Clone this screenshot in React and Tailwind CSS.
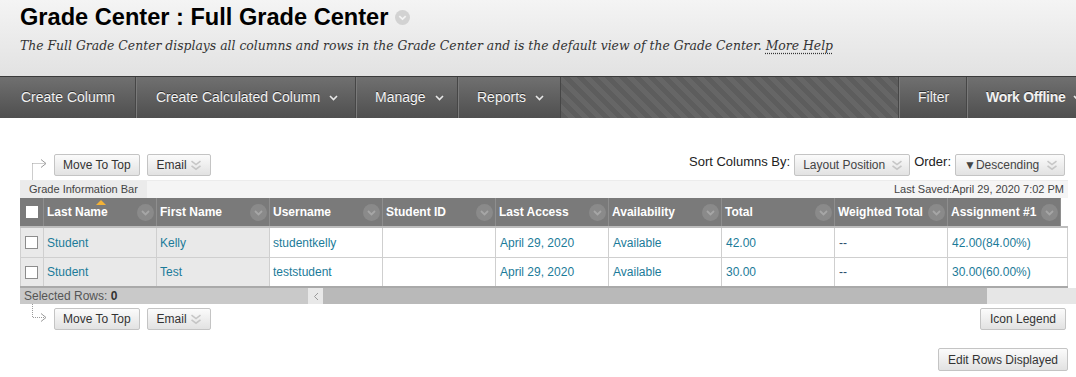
import React from "react";

function DoubleChevron() {
  return (
    <svg width="12" height="11" viewBox="0 0 12 11" className="shrink-0">
      <path d="M1.5 1.2 L6 4.6 L10.5 1.2" fill="none" stroke="#c6c6c6" strokeWidth="1.6" />
      <path d="M1.5 5.8 L6 9.2 L10.5 5.8" fill="none" stroke="#c6c6c6" strokeWidth="1.6" />
    </svg>
  );
}

function NavChevron({ className = "ml-[9px]" }) {
  return (
    <svg width="9" height="6" viewBox="0 0 9 6" className={"shrink-0 " + className}>
      <path d="M1 1 L4.5 4.5 L8 1" fill="none" stroke="#e8e8e8" strokeWidth="1.6" />
    </svg>
  );
}

function CircleChevron() {
  return (
    <svg width="17" height="17" viewBox="0 0 17 17" className="shrink-0">
      <circle cx="8.5" cy="8.5" r="8.5" fill="#8a8a8a" />
      <path d="M5 7 L8.5 10.4 L12 7" fill="none" stroke="#a6a6a6" strokeWidth="1.8" />
    </svg>
  );
}

function Btn({ children, className = "" }) {
  return (
    <div
      className={
        "h-[22px] flex items-center border border-[#c4c4c4] rounded-[2px] bg-linear-to-b from-[#fbfbfb] to-[#e2e2e2] text-[12px] text-[#333] whitespace-nowrap " +
        className
      }
    >
      {children}
    </div>
  );
}

function ConnectorTop() {
  return (
    <svg width="34" height="26" viewBox="0 0 34 26" className="shrink-0">
      <path d="M12.5 9.5 V26 M12.5 9.5 H25" fill="none" stroke="#9a9a9a" strokeWidth="1" strokeDasharray="1 1" />
      <path d="M21 5.5 L26 9.5 L21 13.5" fill="none" stroke="#9a9a9a" strokeWidth="1" />
    </svg>
  );
}

function ConnectorBottom() {
  return (
    <svg width="34" height="26" viewBox="0 0 34 26" className="shrink-0">
      <path d="M12.5 0 V13.5 H25" fill="none" stroke="#9a9a9a" strokeWidth="1" strokeDasharray="1 1" />
      <path d="M21 9.5 L26 13.5 L21 17.5" fill="none" stroke="#9a9a9a" strokeWidth="1" />
    </svg>
  );
}

const cols = [
  "Last Name",
  "First Name",
  "Username",
  "Student ID",
  "Last Access",
  "Availability",
  "Total",
  "Weighted Total",
  "Assignment #1",
];

const rows = [
  ["Student", "Kelly", "studentkelly", "", "April 29, 2020", "Available", "42.00", "--", "42.00(84.00%)"],
  ["Student", "Test", "teststudent", "", "April 29, 2020", "Available", "30.00", "--", "30.00(60.00%)"],
];

const navItem =
  "shrink-0 flex items-center border-l border-[#464646] shadow-[inset_1px_0_0_#7a7a7a] bg-linear-to-b from-[#707070] to-[#4f4f4f] whitespace-nowrap";

export default function App() {
  return (
    <div className="w-[1076px] h-[377px] bg-white font-['Liberation_Sans',Arial,sans-serif] overflow-hidden">
      {/* Page header */}
      <div className="h-[76px] bg-linear-to-b from-[#f4f4f4] to-[#e2e2e2] pl-[20px] pt-[3px]">
        <div className="flex items-center">
          <h1 className="text-[23.6px] leading-[28px] font-bold text-black whitespace-nowrap">
            Grade Center : Full Grade Center
          </h1>
          <svg width="15" height="15" viewBox="0 0 15 15" className="ml-[7px] mt-[1px]">
            <circle cx="7.5" cy="7.5" r="7.5" fill="#d2d2d2" />
            <path d="M4.3 6.2 L7.5 9.2 L10.7 6.2" fill="none" stroke="#f4f4f4" strokeWidth="1.7" />
          </svg>
        </div>
        <p className="mt-[6px] font-['DejaVu_Serif',Georgia,serif] italic text-[12.4px] leading-[18px] text-[#333] whitespace-nowrap">
          The Full Grade Center displays all columns and rows in the Grade Center and is the default view of the
          Grade Center.{" "}
          <span className="underline decoration-dotted underline-offset-[3px]">More Help</span>
        </p>
      </div>

      {/* Action bar */}
      <div className="h-[42px] w-[1076px] flex border-t border-[#3a3a3a] bg-[#5a5a5a] overflow-hidden text-[14px] text-[#f2f2f2] [text-shadow:0_-1px_0_rgba(0,0,0,0.55)]">
        <div className="w-[135px] shrink-0 flex items-center pl-[21px] bg-linear-to-b from-[#707070] to-[#4f4f4f] whitespace-nowrap">
          Create Column
        </div>
        <div className={"w-[220px] pl-[20px] " + navItem}>
          Create Calculated Column
          <NavChevron />
        </div>
        <div className={"w-[102px] pl-[19px] " + navItem}>
          Manage
          <NavChevron />
        </div>
        <div className={"w-[103px] pl-[19px] " + navItem}>
          Reports
          <NavChevron />
        </div>
        <div className="w-[338px] shrink-0 border-l border-[#464646] bg-[repeating-linear-gradient(45deg,#5d5d5d_0px,#5d5d5d_5px,#666666_5px,#666666_10px)]" />
        <div className={"w-[68px] pl-[19px] " + navItem}>Filter</div>
        <div className={"w-[130px] pl-[19px] font-bold tracking-[-0.3px] " + navItem}>
          Work Offline
          <NavChevron className="ml-[8px]" />
        </div>
      </div>

      {/* Content */}
      <div className="pl-[20px] pr-[8px] pt-[36px]">
        {/* Top toolbar */}
        <div className="flex justify-between items-start">
          <div className="flex items-start">
            <ConnectorTop />
            <Btn className="px-[8px]">Move To Top</Btn>
            <Btn className="ml-[7px] pl-[9px] pr-[8px] gap-[3px]">
              Email
              <DoubleChevron />
            </Btn>
          </div>
          <div className="flex items-start mr-[3px]">
            <span className="text-[13px] leading-[16px] text-[#222] mr-[4px] whitespace-nowrap">Sort Columns By:</span>
            <Btn className="w-[116px] pl-[8px] pr-[6px] justify-between text-[#444]">
              Layout Position
              <DoubleChevron />
            </Btn>
            <span className="text-[13px] leading-[16px] text-[#222] ml-[4px] mr-[4px]">Order:</span>
            <Btn className="w-[110px] pl-[8px] pr-[6px] justify-between text-[#444]">
              ▼Descending
              <DoubleChevron />
            </Btn>
          </div>
        </div>

        {/* Grade information bar */}
        <div className="h-[18px] flex items-center justify-between bg-[#f5f5f5] border-t border-[#ececec] text-[11px] text-[#444]">
          <div className="h-full flex items-center px-[9px] bg-[#ebebeb]">Grade Information Bar</div>
          <div className="pr-[4px]">Last Saved:April 29, 2020 7:02 PM</div>
        </div>

        {/* Table header */}
        <div className="flex h-[28px] w-[1041px] bg-[#7a7a7a]">
          <div className="w-[24px] shrink-0 flex items-center justify-center border-r border-[#8e8e8e]">
            <div className="w-[12px] h-[12px] bg-white" />
          </div>
          {cols.map((c, i) => (
            <div
              key={c}
              className="relative w-[113px] shrink-0 flex items-center justify-between pl-[3px] pr-[2px] border-r border-[#8e8e8e]"
            >
              {i === 0 && (
                <span className="absolute left-[52px] top-[2px] w-0 h-0 border-l-[5px] border-r-[5px] border-b-[5px] border-l-transparent border-r-transparent border-b-[#f4b236]" />
              )}
              <span className="text-white font-bold text-[12px] whitespace-nowrap">{c}</span>
              <CircleChevron />
            </div>
          ))}
        </div>
        <div className="h-[2px] w-[1048px] bg-[#bdbdbd]" />

        {/* Table body */}
        {rows.map((r, ri) => (
          <div
            key={ri}
            className={
              "flex h-[30px] w-[1048px] text-[12px] text-[#1b7b99] " +
              (ri === rows.length - 1 ? "border-b-2 border-[#a9a9a9]" : "border-b border-[#cfcfcf]")
            }
          >
            <div className="w-[24px] shrink-0 flex items-center pl-[4px] bg-[#e9e9e9] border-l border-r border-[#cfcfcf]">
              <div className="w-[13px] h-[13px] bg-white border border-[#8c8c8c]" />
            </div>
            {r.map((v, ci) => (
              <div
                key={ci}
                className={
                  "shrink-0 flex items-center border-r border-[#cfcfcf] whitespace-nowrap " +
                  (ci === 8 ? "w-[120px] " : "w-[113px] ") +
                  (ci < 2 ? "bg-[#e9e9e9] " : "bg-white ") +
                  (ci >= 3 ? "pl-[4px] " : "pl-[3px] ") +
                  (v === "--" ? "text-[#2b4d6b]" : "")
                }
              >
                {v}
              </div>
            ))}
          </div>
        ))}

        {/* Selected rows + scrollbar */}
        <div className="flex h-[16px] mr-[-8px]">
          <div className="w-[288px] shrink-0 bg-[#c9c9c9] pl-[4px] text-[12px] leading-[16px] text-[#555]">
            Selected Rows: <b className="text-[#333]">0</b>
          </div>
          <div className="w-[15px] shrink-0 bg-[#e8e8e8] flex items-center justify-center">
            <svg width="6" height="9" viewBox="0 0 6 9">
              <path d="M5 1 L1.5 4.5 L5 8" fill="none" stroke="#9a9a9a" strokeWidth="1" />
            </svg>
          </div>
          <div className="w-[664px] shrink-0 bg-[#b9b9b9]" />
          <div className="flex-1 bg-[#e6e6e6]" />
        </div>

        {/* Bottom toolbar */}
        <div className="flex justify-between items-start">
          <div className="flex items-start">
            <ConnectorBottom />
            <Btn className="mt-[4px] px-[8px]">Move To Top</Btn>
            <Btn className="mt-[4px] ml-[7px] pl-[9px] pr-[8px] gap-[3px]">
              Email
              <DoubleChevron />
            </Btn>
          </div>
          <Btn className="mt-[4px] mr-[2px] px-[9px]">Icon Legend</Btn>
        </div>
        <div className="flex justify-end mt-[18px]">
          <Btn className="px-[9px] h-[23px]">Edit Rows Displayed</Btn>
        </div>
      </div>
    </div>
  );
}
